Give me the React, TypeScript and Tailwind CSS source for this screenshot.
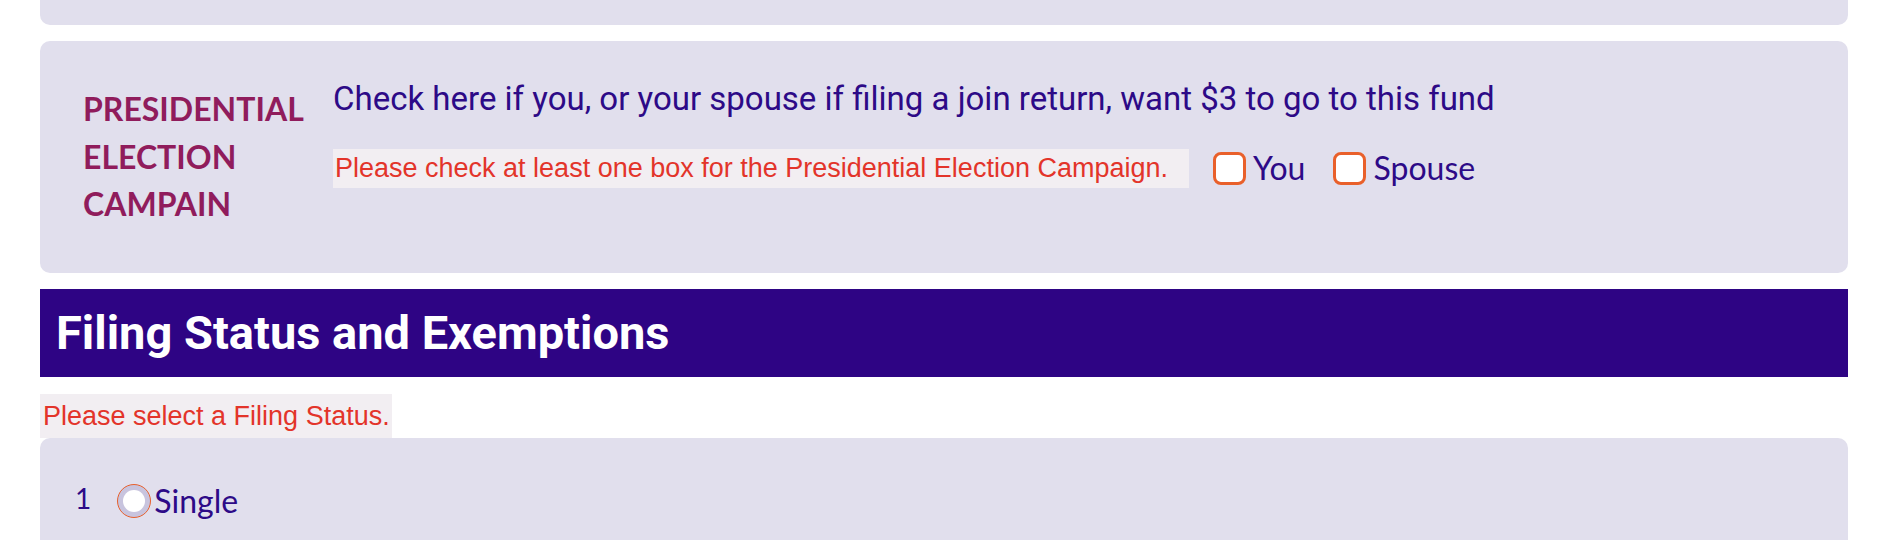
import React from "react"

function CheckBox({ label }: { label: string }) {
  return (
    <label className="flex items-center gap-[7px]">
      <span className="h-[33px] w-[33px] rounded-[8px] border-[3px] border-[#e9602b] bg-white" />
      <span className="font-['Lato',sans-serif] text-[32px] leading-[40px] text-[#2d0a87]">{label}</span>
    </label>
  )
}

export default function App() {
  return (
    <div className="min-h-screen bg-white px-[40px]">
      {/* tail of previous card */}
      <div className="h-[25px] rounded-b-[10px] bg-[#e1dfed]" />

      {/* Presidential election */}
      <section className="mt-[16px] flex h-[232px] items-start rounded-[10px] bg-[#e1dfed] pl-[43px]">
        <h3 className="w-[250px] shrink-0 pt-[44px] font-['Lato',sans-serif] text-[32px] font-bold leading-[47.5px] text-[#901c5c]">
          PRESIDENTIAL
          <br />
          ELECTION
          <br />
          CAMPAIN
        </h3>
        <div className="pt-[38px]">
          <p className="font-['Roboto',sans-serif] text-[33px] leading-[40px] text-[#2d0a87]">
            Check here if you, or your spouse if filing a join return, want $3 to go to this fund
          </p>
          <div className="mt-[29px] flex items-center">
            <span className="flex h-[39px] w-[856px] items-center bg-[#f2eef2] pl-[2px] font-['Liberation_Sans',Arial,sans-serif] text-[27px] text-[#e3342a]">
              Please check at least one box for the Presidential Election Campaign.
            </span>
            <div className="ml-[24px] flex items-center gap-[28px]">
              <CheckBox label="You" />
              <CheckBox label="Spouse" />
            </div>
          </div>
        </div>
      </section>

      {/* Filing status header */}
      <h2 className="mt-[16px] flex h-[88px] items-center bg-[#2e0484] pl-[16px] font-['Roboto',sans-serif] text-[47px] font-bold text-white">
        Filing Status and Exemptions
      </h2>

      <div className="mt-[17px] flex h-[44px] w-[352px] items-center bg-[#f2eef2] pl-[3px] font-['Liberation_Sans',Arial,sans-serif] text-[27px] text-[#e3342a]">
        Please select a Filing Status.
      </div>

      <div className="h-[140px] rounded-t-[10px] bg-[#e1dfed] pl-[35px] pt-[39px]">
        <div className="flex items-center">
          <span className="mb-[6px] font-['Lato',sans-serif] text-[28px] text-[#2d0a87]">1</span>
          <span className="ml-[26px] flex h-[34px] w-[34px] items-center justify-center rounded-full border border-[#e8602c] bg-[#c8c4de]">
            <span className="h-[22px] w-[22px] rounded-full bg-white" />
          </span>
          <span className="ml-[3px] font-['Lato',sans-serif] text-[32px] leading-[40px] text-[#2d0a87]">Single</span>
        </div>
      </div>
    </div>
  )
}
